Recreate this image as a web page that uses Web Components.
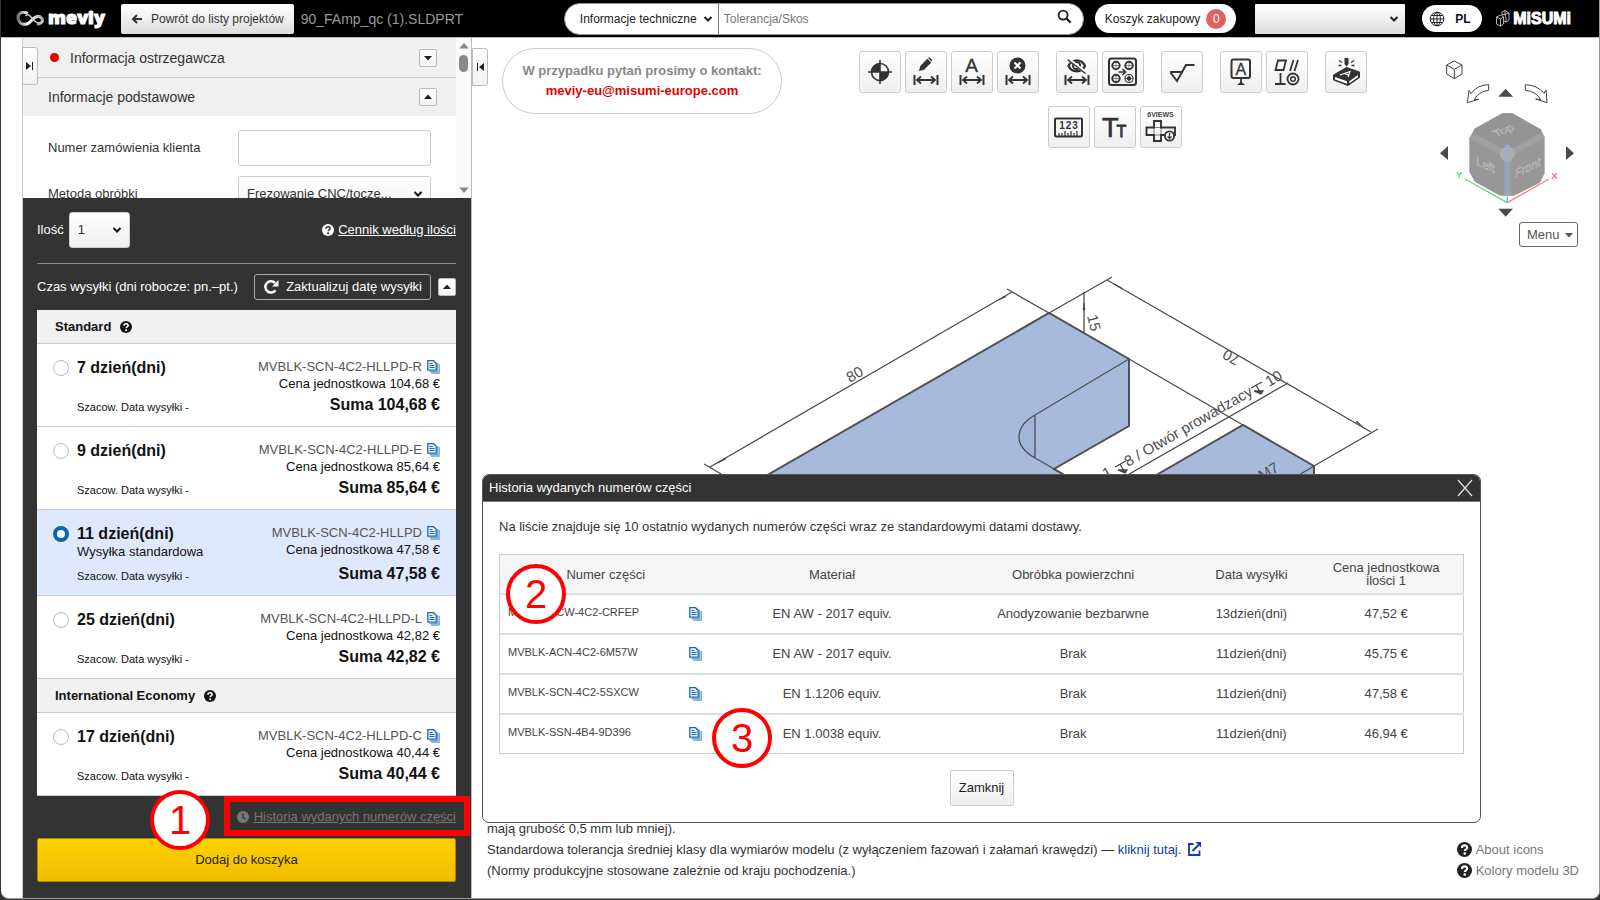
<!DOCTYPE html>
<html lang="pl">
<head>
<meta charset="utf-8">
<title>meviy</title>
<style>
html, body { margin: 0; height: 100%; }
body { background: #333; font: 13px/16px "Liberation Sans", Arial, sans-serif; color: #333; overflow: hidden; }
</style>
</head>
<body>
<meviy-app></meviy-app>
<script>
const define = (name, html, setup) => {
  const tpl = document.createElement('template');
  tpl.innerHTML = html;
  customElements.define(name, class extends HTMLElement {
    constructor() {
      super();
      this.attachShadow({ mode: 'open' }).append(tpl.content.cloneNode(true));
    }
    connectedCallback() { if (setup) setup(this, this.shadowRoot); }
  });
};

const DIM = '<path d="M9.5 24v10M32.5 24v10" stroke-width="2"/><path d="M11.500 29h19M16 25.500 12 29l4 3.500M26 25.500l4 3.500-4 3.500" stroke-width="1.800"/>';
const ICONS = {
  back: ['0 0 12 12', '<path d="M11 6H2M6 2 2 6l4 4" fill="none" stroke="currentColor" stroke-width="2"/>'],
  chevron: ['0 0 10 8', '<path d="m1.500 2 3.500 3.500L8.500 2" fill="none" stroke="currentColor" stroke-width="2"/>'],
  search: ['0 0 16 16', '<circle cx="6.500" cy="6.500" r="4.800" fill="none" stroke="currentColor" stroke-width="2"/><path d="m10 10 4.500 4.500" stroke="currentColor" stroke-width="2.400"/>'],
  globe: ['0 0 16 16', '<g fill="none" stroke="#222" stroke-width="1"><circle cx="8" cy="8" r="6.800"/><ellipse cx="8" cy="8" rx="3.400" ry="6.800"/><path d="M8 1v14M1 8h14M2.200 4.500h11.600M2.200 11.500h11.600"/></g>'],
  down: ['0 0 10 10', '<path d="M1 3h8L5 7.500z" fill="currentColor"/>'],
  up: ['0 0 10 10', '<path d="M1 7h8L5 2.500z" fill="currentColor"/>'],
  right: ['0 0 10 10', '<path d="M1 1v8l5-4z" fill="currentColor"/><path d="M7.500 1v8" stroke="currentColor"/>'],
  left: ['0 0 10 10', '<path d="M9 1v8L4 5z" fill="currentColor"/><path d="M2.500 1v8" stroke="currentColor"/>'],
  help: ['0 0 12 12', '<circle cx="6" cy="6" r="6" fill="currentColor"/><path d="M4 4.700c0-2.600 4.100-2.600 4.100-.2 0 1.400-1.900 1.400-1.900 2.700" fill="none" stroke="var(--hole,#fff)" stroke-width="1.700"/><circle cx="6.200" cy="9.200" r="1.050" fill="var(--hole,#fff)"/>'],
  clock: ['0 0 12 12', '<circle cx="6" cy="6" r="6" fill="currentColor"/><path d="M6 2.500V6.500l2.500 1.500" fill="none" stroke="#333" stroke-width="1.400"/>'],
  refresh: ['0 0 16 16', '<path d="M12.500 11.200A5.600 5.600 0 1 1 12 4" fill="none" stroke="currentColor" stroke-width="2.600"/><path d="M15.500 1v6.500H9z" fill="currentColor"/>'],
  copy: ['0 0 13 14', '<path d="M4 13.200h8.200V4M2.500 11.600h8V3" fill="none" stroke="#6ba3d6" stroke-width="1.300"/><path d="M.8.700h5.700l2.700 2.600v6.900H.8z" fill="#e9f2fb" stroke="#1f69b3" stroke-width="1.300"/><path d="M2.500 3.500h3M2.500 5.500h5M2.500 7.500h5" stroke="#1f69b3"/>'],
  external: ['0 0 13 14', '<path d="M5.500 2H1v11h10.500V8.500" fill="none" stroke="#0b3fa8" stroke-width="1.800"/><path d="M7.500 0H13v5.500z" fill="#0b3fa8"/><path d="m4.500 9 6-6" stroke="#0b3fa8" stroke-width="2"/>'],
  close: ['0 0 16 18', '<path d="m1 1 14 16M15 1 1 17" stroke="currentColor" stroke-width="1.300"/>'],
  target: ['0 0 42 42', '<circle cx="21" cy="21" r="8.500" stroke-width="1.600"/><path d="M21 9v24M9 21h24" stroke-width="1.600"/><path d="M21 21v-8.500A8.500 8.500 0 0 0 12.500 21zM21 21v8.500A8.500 8.500 0 0 0 29.500 21z" fill="#333" stroke="none"/>'],
  pencil: ['0 0 42 42', DIM + '<path d="m14 20 1.300-5 7-7.200 4 3.800-7.200 7.200z" fill="#333" stroke="none"/><path d="m23 7 1.300-.800 3 2.900-.800 1.500z" fill="#333" stroke="none"/>'],
  auto: ['0 0 42 42', DIM + '<text x="20.500" y="20.500" text-anchor="middle" font-size="19" fill="#333" stroke="#333" stroke-width=".4">A</text>'],
  remove: ['0 0 42 42', DIM + '<circle cx="20.500" cy="14.500" r="8" fill="#333" stroke="none"/><path d="m17.500 11.500 6 6M23.500 11.500l-6 6" stroke="#fff" stroke-width="2.200"/>'],
  hide: ['0 0 42 42', DIM + '<path d="M12.500 15c3.500-7.500 13-7.500 16.500 0-3.500 7-13 7-16.500 0z" stroke-width="2.400"/><circle cx="20.500" cy="14.500" r="3.600" stroke-width="2"/><path d="m12.500 8 17 13.500" stroke="#fff" stroke-width="3"/><path d="m11.500 8.500 18 14" stroke-width="1.400"/>'],
  holes: ['0 0 42 42', '<rect x="7" y="7.500" width="27" height="26.500" rx="2.500" stroke-width="2"/><circle cx="14" cy="14.500" r="3.700" stroke-width="1.900"/><circle cx="27" cy="14.500" r="3.700" stroke-width="1.900"/><circle cx="14" cy="27.500" r="3.700" stroke-width="1.900"/><circle cx="27" cy="27.500" r="4" stroke-width="1.100"/><circle cx="27" cy="27.500" r="1.800" fill="#333"/><path d="M9.500 14.500h9M14 10v9M22.500 14.500h9M27 10v9M9.500 27.500h9M14 23v9M22.500 27.500h9M27 23v9" stroke-width=".5"/><path d="M16.500 21h7M20.500 18l3 3-3 3" stroke-width="1.600"/>'],
  rough: ['0 0 42 42', '<path d="M9 21h13M9.500 21.500 16 30l9-16h8.500" stroke-width="2"/>'],
  datum: ['0 0 42 42', '<rect x="11.500" y="8.500" width="18.500" height="18.500" rx="2" stroke-width="2"/><path d="M21 27v5" stroke-width="1.800"/><path d="m17 34 4-3.500 4 3.500z" fill="#333" stroke="none"/><text x="20.800" y="23.500" text-anchor="middle" font-size="16" fill="#333" stroke="#333" stroke-width=".3">A</text>'],
  gdt: ['0 0 42 42', '<path d="M12 9.500h8L17.500 19h-8zM24 20l3.500-11M28.500 20 32 9M14.500 22v10.500M9 33h10.500" stroke-width="1.800"/><circle cx="27" cy="28" r="5.500" stroke-width="1.800"/><circle cx="27" cy="28" r="2.300" stroke-width="1.500"/>'],
  stamp: ['0 0 42 42', '<path d="m8.500 24 13-7.500 13 4.500v5.500L23 34.500 8.500 29z" fill="#333" stroke-width="1"/><path d="m10 26 12 4.300v2.400L10 28.500zM24.300 30.300 33 24v2.300l-8.700 6z" fill="#fff" stroke="none"/><path d="m15 24 10-3.500-2 5.500M19 22.500l5 1.500" stroke="#fff" stroke-width="1.200"/><path d="M19.500 7h4v6l-2 2.500-2-2.500z" fill="#333" stroke="none"/><path d="m14 9.500 3 2M29 9.500l-3 2M13.500 14.500h3M26.500 14.500h3" stroke-width="1.300"/>'],
  ruler: ['0 0 42 42', '<rect x="7" y="12.500" width="27" height="18" rx="1" stroke-width="2"/><text x="21" y="23" text-anchor="middle" font-size="10" font-weight="700" letter-spacing="1" fill="#333" stroke="none">123</text><path d="M11 30v-3M14 30v-3M17 30v-5M20 30v-3M23 30v-5M26 30v-3M29 30v-5" stroke-width="1.200"/>'],
  text: ['0 0 42 42', '<text x="8" y="31" font-size="27" fill="#333" stroke="#333" stroke-width=".6">T</text><text x="22.500" y="31" font-size="16" fill="#333" stroke="#333" stroke-width=".8">T</text>'],
  views: ['0 0 42 42', '<text x="20.500" y="11" text-anchor="middle" font-size="7" font-weight="700" fill="#444" stroke="none">6VIEWS</text><path d="M14 15h7v6.500h14v7.500H21v6h-7v-6H6.500v-7.500H14z" stroke-width="1.900"/><path d="M14 21.500h7v7.500h-7z" stroke-width=".6"/><circle cx="29.500" cy="30" r="4.600" fill="#fff" stroke-width="1.900"/><path d="M29.500 27v5M27.500 30.500l2 2 2-2" stroke-width="1.300"/>']
};
customElements.define('ui-icon', class extends HTMLElement {
  connectedCallback() {
    if (this.shadowRoot) return;
    const [box, body] = ICONS[this.getAttribute('name')];
    const w = this.getAttribute('w'), h = this.getAttribute('h') || w;
    this.attachShadow({ mode: 'open' }).innerHTML =
      `<style>:host{display:inline-flex;flex:none}svg{display:block;font-family:"Liberation Sans",sans-serif}</style>
       <svg width="${w}" height="${h}" viewBox="${box}" aria-hidden="true">${body}</svg>`;
  }
});

define('tool-button', `
<style>
:host { display: block; }
button { display: block; box-sizing: border-box; width: 42px; height: 42px; padding: 0; border: 1px solid #ccc; border-radius: 3px; background: linear-gradient(#fff, #efefef); }
svg { display: block; width: 40px; height: 40px; font-family: "Liberation Sans", sans-serif; }
</style>
<button type="button"><svg viewBox="1 1 40 40" fill="none" stroke="#333" aria-hidden="true"></svg></button>`,
(el, root) => {
  root.querySelector('svg').innerHTML = ICONS[el.getAttribute('icon')][1];
  root.querySelector('button').setAttribute('aria-label', el.getAttribute('label'));
});

define('toggle-button', `
<style>
:host { display: block; flex: none; }
button { display: grid; place-items: center; box-sizing: border-box; width: 18px; height: 18px; padding: 0; border: 1px solid #bbb; border-radius: 2px; background: linear-gradient(#fff, #f2f2f2); color: #222; }
:host([tab]) button { width: 16px; height: 38px; border-radius: 0 3px 3px 0; }
</style>
<button type="button" aria-label="Zwiń lub rozwiń"></button>`,
(el, root) => { root.querySelector('button').innerHTML = `<ui-icon name="${el.getAttribute('icon')}" w="10"></ui-icon>`; });

define('step-badge', `
<style>
:host { position: absolute; box-sizing: border-box; display: grid; place-items: center; width: 60px; height: 60px; border: 4px solid #f00; border-radius: 50%; background: #fff; color: #f00; font-size: 40px; line-height: 52px; }
</style><span><slot></slot></span>`);

define('app-header', `
<style>
:host { display: flex; align-items: center; height: 37px; background: #000; border-bottom: 1px solid #bbb; font-size: 12px; padding-right: 28px; }
button, select, input { font: inherit; border: 0; margin: 0; }
.logo { display: flex; align-items: center; gap: 2px; margin-left: 15px; color: #fff; text-decoration: none; width: 105px; }
.logo b { font: 800 18px/22px "Open Sans", sans-serif; margin-top: -4px; -webkit-text-stroke: 1px #fff; }
.back { display: flex; align-items: center; gap: 8px; height: 30px; padding: 0 10px; background: linear-gradient(#fff, #ddd); color: #333; border-radius: 2px; }
h1 { margin: 0 0 0 7px; font-size: 14px; font-weight: 400; color: #999; white-space: nowrap; flex: 1; }
.search { display: flex; align-items: center; height: 32px; width: 520px; border: 1px solid #999; border-radius: 17px; background: #fff; overflow: hidden; box-sizing: border-box; }
.sel { position: relative; display: flex; align-items: center; color: #222; }
.sel ui-icon { position: absolute; right: 6px; pointer-events: none; }
select { appearance: none; background: none; color: inherit; outline: none; }
.search select { width: 154px; height: 32px; padding: 0 0 0 15px; border-right: 1px solid #777; }
input { flex: 1; padding: 0 5px; outline: none; color: #333; }
input::placeholder { color: #777; }
.search button { background: none; padding: 0 11px; color: #222; }
.cart { display: flex; align-items: center; gap: 6px; height: 29px; margin-left: 11px; padding: 0 10px; border-radius: 15px; background: #fff; color: #222; white-space: nowrap; }
.cart span { display: grid; place-items: center; width: 20px; height: 20px; border-radius: 50%; background: #e06060; color: #fff; }
.user { margin-left: 19px; }
.user select { width: 150px; height: 30px; background: linear-gradient(#fff, #ddd); border-radius: 1px; }
.lang { display: flex; align-items: center; gap: 10px; height: 27px; width: 60px; margin-left: 17px; padding: 0 7px; border-radius: 14px; background: #fff; color: #111; font-weight: 700; }
.misumi { display: flex; align-items: center; gap: 3px; margin-left: 14px; color: #fff; font: 700 16px/18px "Liberation Sans", sans-serif; text-decoration: none; -webkit-text-stroke: 1px #fff; }
</style>
<a class="logo" href="#" aria-label="meviy">
  <svg width="30" height="16" viewBox="0 0 29 16"><defs><linearGradient id="g"><stop offset="0" stop-color="#777"/><stop offset=".4" stop-color="#fff"/><stop offset="1" stop-color="#aaa"/></linearGradient></defs><path d="M11 2.500C5-1 0 3.500 2 9c2 5.500 8.500 5.500 12 1.500 4-4.500 8-7 11-3.500 2.500 3-1 6.500-4 5.500" fill="none" stroke="url(#g)" stroke-width="3"/><path d="M9 5c3-4 6 2 9 5s7 3 9 0" fill="none" stroke="#ccc" stroke-width="1.500"/></svg>
  <b>meviy</b></a>
<button class="back" type="button"><ui-icon name="back" w="12"></ui-icon>Powrót do listy projektów</button>
<h1>90_FAmp_qc (1).SLDPRT</h1>
<div class="search">
  <div class="sel"><select aria-label="Kategoria"><option>Informacje techniczne</option></select><ui-icon name="chevron" w="10" h="8"></ui-icon></div>
  <input type="text" placeholder="Tolerancja/Skos" aria-label="Szukaj">
  <button type="button" aria-label="Szukaj"><ui-icon name="search" w="15"></ui-icon></button>
</div>
<button class="cart" type="button">Koszyk zakupowy <span>0</span></button>
<div class="sel user"><select aria-label="Konto"><option></option></select><ui-icon name="chevron" w="10" h="8"></ui-icon></div>
<button class="lang" type="button"><ui-icon name="globe" w="16"></ui-icon>PL</button>
<a class="misumi" href="#"><svg width="14" height="17" viewBox="0 0 14 17" fill="none" stroke="#ddd" stroke-width=".8"><path d="m.5 7 4-2 3 2v7l-3 2-4-2zM.5 7l4 2 3-2M4.500 9v7M6 5V2l3-1.500L13 3v7l-3 2-2.500-1M9 .5v4l4-1.500M6 5l3-.5 1 3.500v4"/></svg>MiSUMi</a>`);

define('ship-group', `
<style>
:host { display: flex; align-items: center; gap: 9px; box-sizing: border-box; height: 34px; padding: 0 18px; background: #f1f1f1; border-bottom: 1px solid #ccc; color: #111; font-weight: 700; }
</style><slot></slot><ui-icon name="help" w="12"></ui-icon>`);

define('ship-option', `
<style>
:host { --rows: 82px; display: block; background: #fff; border-bottom: 1px solid #ccc; color: #111; }
:host([checked]) { --rows: 85px; background: #dfe9fd; }
label { display: grid; grid-template-columns: 16px auto 1fr; column-gap: 8px; min-height: var(--rows); box-sizing: border-box; padding: 14px 16px 11px; }
input { appearance: none; box-sizing: border-box; width: 16px; height: 16px; margin: 2px 0; border: 1px solid #bbb; border-radius: 50%; background: #fff; }
input:checked { border: 4px solid #0b63b5; }
.l, .r { display: flex; flex-direction: column; }
.r { align-items: flex-end; line-height: 17px; }
b { font-size: 16px; line-height: 20px; }
small { font-size: 11px; margin-top: auto; }
.r b { margin-top: auto; }
.code { display: flex; gap: 5px; align-items: center; color: #555; }
</style>
<label><input type="radio" name="ship"><span class="l"><b class="d"></b><span class="n"></span><small>Szacow. Data wysyłki -</small></span>
<span class="r"><span class="code"><span class="c"></span><ui-icon name="copy" w="13" h="14"></ui-icon></span><span class="u"></span><b class="s"></b></span></label>`,
(el, root) => {
  const q = s => root.querySelector(s), a = n => el.getAttribute(n) || '';
  q('.d').textContent = a('days') + ' dzień(dni)';
  q('.n').textContent = a('note');
  q('.c').textContent = a('code');
  q('.u').textContent = `Cena jednostkowa ${a('price')} €`;
  q('.s').textContent = `Suma ${a('price')} €`;
  q('input').checked = el.hasAttribute('checked');
});

define('side-panel', `
<style>
:host { display: flex; flex-direction: column; position: relative; border-left: 1px solid #ccc; border-right: 1px solid #bbb; box-sizing: border-box; background: #fff; }
.top { display: flex; height: 160px; overflow: hidden; }
.info { flex: 1; }
.row { display: flex; align-items: center; box-sizing: border-box; height: 39px; padding: 0 19px 0 25px; background: #f0f0f0; font-size: 14px; }
.row + .row { border-top: 1px solid #ccc; }
.row span { flex: 1; }
.row i { width: 9px; height: 9px; margin-right: 11px; border-radius: 50%; background: #e60000; }
.row:first-child { padding-left: 27px; }
.field { display: flex; align-items: center; justify-content: space-between; margin: 0 25px 10px; }
.row + .field { margin-top: 14px; }
input, select { font: inherit; color: #333; box-sizing: border-box; border: 1px solid #ccc; border-radius: 3px; height: 36px; outline: none; }
select { appearance: none; width: 100%; padding: 0 8px; background: linear-gradient(#fff, #f0f0f0); }
.field input, .field .sel { width: 193px; }
.sel { position: relative; display: flex; align-items: center; }
.sel ui-icon { position: absolute; right: 8px; pointer-events: none; color: #111; }
.bar { width: 15px; background: #fafafa; display: flex; flex-direction: column; align-items: center; color: #888; padding: 2px 0; box-sizing: border-box; }
.bar i { width: 9px; height: 17px; border-radius: 5px; background: #8a8a8a; margin: 3px 0 auto; }
toggle-button[tab] { position: absolute; left: -1px; top: 9px; }
.dark { flex: 1; background: #333; color: #fff; padding: 14px 15px 16px 14px; display: flex; flex-direction: column; }
.line { display: flex; align-items: center; gap: 5px; }
.qty { padding-bottom: 15px; border-bottom: 1px solid #888; }
.qty .sel { width: 61px; margin-right: auto; }
a { color: inherit; }
.qty a { margin-left: -1px; }
.time { padding: 10px 0; gap: 7px; justify-content: space-between; }
.time .re { display: flex; align-items: center; gap: 7px; height: 26px; box-sizing: border-box; margin-left: auto; padding: 0 8px; font: inherit; color: #fff; background: none; border: 1px solid #aaa; border-radius: 3px; }
.hist { display: flex; justify-content: flex-end; align-items: center; gap: 5px; height: 42px; color: #777; }
.add { height: 44px; border: 1px solid #a68b00; border-radius: 2px; background: linear-gradient(#ffd000, #f0be00); font: inherit; color: #222; }
.frame { position: absolute; right: 1px; top: 758px; width: 246px; height: 40px; box-sizing: border-box; border: 6px solid #f00; pointer-events: none; }
step-badge { left: 127px; top: 752px; }
</style>
<div class="top">
  <div class="info">
    <div class="row"><i></i><span>Informacja ostrzegawcza</span><toggle-button icon="down"></toggle-button></div>
    <div class="row"><span>Informacje podstawowe</span><toggle-button icon="up"></toggle-button></div>
    <div class="field"><label for="order">Numer zamówienia klienta</label><input id="order" type="text"></div>
    <div class="field"><label for="method">Metoda obróbki</label><div class="sel"><select id="method"><option>Frezowanie CNC/tocze...</option></select><ui-icon name="chevron" w="10" h="8"></ui-icon></div></div>
  </div>
  <div class="bar"><ui-icon name="up" w="12"></ui-icon><i></i><ui-icon name="down" w="12"></ui-icon></div>
</div>
<toggle-button tab icon="right"></toggle-button>
<div class="dark">
  <div class="line qty"><label for="qty">Ilość</label><div class="sel"><select id="qty"><option>1</option></select><ui-icon name="chevron" w="10" h="8"></ui-icon></div>
    <ui-icon name="help" w="12" style="--hole:#333"></ui-icon><a href="#">Cennik według ilości</a></div>
  <div class="line time"><span>Czas wysyłki (dni robocze: pn.–pt.)</span><button class="re" type="button"><ui-icon name="refresh" w="16"></ui-icon>Zaktualizuj datę wysyłki</button><toggle-button icon="up"></toggle-button></div>
  <ship-group>Standard</ship-group>
  <ship-option days="7" code="MVBLK-SCN-4C2-HLLPD-R" price="104,68"></ship-option>
  <ship-option days="9" code="MVBLK-SCN-4C2-HLLPD-E" price="85,64"></ship-option>
  <ship-option days="11" code="MVBLK-SCN-4C2-HLLPD" price="47,58" note="Wysyłka standardowa" checked></ship-option>
  <ship-option days="25" code="MVBLK-SCN-4C2-HLLPD-L" price="42,82"></ship-option>
  <ship-group>International Economy</ship-group>
  <ship-option days="17" code="MVBLK-SCN-4C2-HLLPD-C" price="40,44"></ship-option>
  <div class="hist"><ui-icon name="clock" w="12"></ui-icon><a href="#">Historia wydanych numerów części</a></div>
  <button class="add" type="button">Dodaj do koszyka</button>
</div>
<div class="frame"></div>
<step-badge>1</step-badge>`);

define('history-dialog', `
<style>
:host { position: absolute; display: block; box-sizing: border-box; border: 1px solid #555; border-radius: 7px; background: #fff; overflow: hidden; }
header { display: flex; align-items: center; justify-content: space-between; height: 26px; padding: 0 7px 0 6px; background: #333; color: #fff; border-bottom: 1px solid #777; }
h2 { font-size: 13px; font-weight: 400; margin: 0; }
header button { padding: 0; border: 0; background: none; color: #ddd; display: flex; }
p { margin: 17px 16px 19px; }
table { width: calc(100% - 32px); margin: 0 16px; border-collapse: collapse; table-layout: fixed; border: 1px solid #ccc; }
th { background: #f6f6f6; font-weight: 400; line-height: 13px; }
th, td { height: 38px; padding: 0; text-align: center; border-bottom: 2px solid #ddd; color: #444; }
tr:last-child td { border-bottom: 1px solid #ccc; }
.cell { display: flex; align-items: center; justify-content: space-between; padding: 0 10px 0 8px; font-size: 11px; }
.cell span { margin-top: -5px; }
footer { display: flex; justify-content: center; padding: 16px 0; }
footer button { width: 64px; height: 36px; padding: 0; border: 1px solid #ccc; border-radius: 2px; background: linear-gradient(#fff, #efefef); font: inherit; color: #222; }
.two { left: 23px; top: 89px; }
.three { left: 229px; top: 233px; }
</style>
<header><h2>Historia wydanych numerów części</h2><button type="button" aria-label="Zamknij"><ui-icon name="close" w="16" h="18"></ui-icon></button></header>
<p>Na liście znajduje się 10 ostatnio wydanych numerów części wraz ze standardowymi datami dostawy.</p>
<table>
<colgroup><col style="width:22%"><col style="width:25%"><col style="width:25%"><col style="width:12%"><col></colgroup>
<thead><tr><th>Numer części</th><th>Materiał</th><th>Obróbka powierzchni</th><th>Data wysyłki</th><th>Cena jednostkowa<br>ilości 1</th></tr></thead>
<tbody></tbody></table>
<footer><button type="button">Zamknij</button></footer>
<step-badge class="two">2</step-badge><step-badge class="three">3</step-badge>`,
(el, root) => {
  root.querySelector('tbody').innerHTML = [
    ['MVBLK-ACW-4C2-CRFEP', 'EN AW - 2017 equiv.', 'Anodyzowanie bezbarwne', '13dzień(dni)', '47,52 €'],
    ['MVBLK-ACN-4C2-6M57W', 'EN AW - 2017 equiv.', 'Brak', '11dzień(dni)', '45,75 €'],
    ['MVBLK-SCN-4C2-5SXCW', 'EN 1.1206 equiv.', 'Brak', '11dzień(dni)', '47,58 €'],
    ['MVBLK-SSN-4B4-9D396', 'EN 1.0038 equiv.', 'Brak', '11dzień(dni)', '46,94 €']
  ].map(([c, ...r]) => `<tr><td><div class="cell"><span>${c}</span><ui-icon name="copy" w="13" h="14"></ui-icon></div></td>${r.map(t => `<td>${t}</td>`).join('')}</tr>`).join('');
});

define('view-cube', `
<style>
:host { display: flex; flex-direction: column; align-items: flex-end; width: 180px; }
svg { display: block; width: 180px; height: 172px; font-family: "Liberation Sans", sans-serif; }
button { display: flex; align-items: center; justify-content: space-between; box-sizing: border-box; width: 59px; height: 25px; margin-right: 21px; padding: 0 3px 0 7px; border: 1px solid #666; border-radius: 3px; background: #fff; font: inherit; color: #555; }
</style>
<svg viewBox="0 0 540 516" role="img" aria-label="Kostka widoku">
<g fill="#fff" stroke="#444" stroke-width="3"><path d="m106 33 23 12v27l-23 14-23-14V45zM83 45l23 13 23-13M106 58v28"/>
<path d="M209 104v17q-32 4-43 28l13-1-34 10 5-37 6 10q18-26 53-27zM319 104v17q35 4 46 28l-15-2 34 11-3-38-6 10q-20-25-56-26z"/></g>
<g fill="#4a4a4a"><path d="m238 140 22-24 22 24zM238 476l22 24 22-24zM87 288v42l-24-20zM441 288v42l24-20z"/></g>
<path d="M250 190h30l85 48 12 24v108l-14 28-78 39h-42l-76-42-16-30V265l15-28z" fill="#979797"/>
<g fill="#a0a0a0"><path d="m150 265 15-14 88 47-12 14-76-40zM377 262l-14-12-88 48 13 14 76-42zM255 330h22v107h-22z"/><path d="m165 237 85-47h30l85 48-2 12-98 50-98-49z" fill="#949494"/></g>
<path d="m265 288 20 10 3 20-12 16h-22l-12-16 3-20z" fill="#adadad"/>
<g fill="#999" stroke="#c6c6c6" stroke-width="1.500" font-size="40"><text transform="matrix(.86 -.38 .5 .6 232 262)">Top</text><text transform="matrix(.82 .36 0 .9 172 345)">Left</text><text transform="matrix(.82 -.4 0 .9 288 384)">Front</text></g>
<g stroke-width="4"><path d="m265 458-127-71" stroke="#5dd67c"/><path d="m265 458 125-71" stroke="#ff7b7b"/><path d="M265 458V315" stroke="#7ab4f0"/></g>
<g font-size="28" font-weight="700" text-anchor="middle"><text x="120" y="385" fill="#5dd67c">Y</text><text x="407" y="386" fill="#ff6b6b">X</text><text x="265" y="303" fill="#7ab4f0">Z</text></g>
</svg>
<button type="button">Menu<ui-icon name="down" w="10"></ui-icon></button>`);

define('cad-model', `
<style>:host { display: block; } svg { display: block; width: 700px; height: 215px; font: 15px "Liberation Sans", sans-serif; }</style>
<svg viewBox="690 270 700 215" role="img" aria-label="Model 3D">
<g fill="#a8badc" stroke="none"><path d="M750 485 1049 313l80 46v67l-75 43 28 16z"/><path d="m1139 485 104-60 71 41v19z"/></g>
<g fill="none" stroke="#505050" stroke-width="2"><path d="M750 485 1049 313l80 46v67l-75 43 28 16"/><path d="m1139 485 104-60 71 41v19"/></g>
<path d="M1035 415q-16 9-16 22 0 12 16 21z" fill="#9fb4d6"/>
<g fill="none" stroke="#4d4d4d" stroke-width="1.300"><path d="m1129 359-94 56q-16 9-16 22 0 12 16 21l28 16M1035 415v43M1314 466l-32 19"/>
<path d="m710 467 302-175M704 464l36 21M1007 289l42 24 63-36M1084 292v41M1107 280l264 152M1378 429l-64 37M1129 359l114 66M1110 485l178-102"/></g>
<path d="m718 463 7-5 1 1zM998 300l7-4 1 1zM1084 303l1 7h-2zM1114 284l8 4v1zM1363 427l-7-5 1-1z" fill="#444" stroke="#444" stroke-width=".5"/>
<g fill="#505050"><text transform="translate(850 383) rotate(-30)">80</text><text transform="translate(1087 316) rotate(76)">15</text><text transform="translate(1241 357) rotate(210)">70</text>
<text transform="translate(1128 467) rotate(-30)">8 / Otwór prowadzacy</text><text transform="translate(1269 387) rotate(-30)">10</text><text transform="translate(1262 481) rotate(-30)">M7</text><text transform="translate(1106 479) rotate(-30)">1</text></g>
<g fill="#444" stroke="#444" stroke-width="1.300"><path d="m1251 388 11-6M1256 385l4 7M1254 391h9l-2 3zM1115 467l11-6M1120 464l4 7M1118 470h9l-2 3z"/></g>
</svg>`);

define('cad-viewer', `
<style>
:host { display: flex; flex-direction: column; position: relative; background: #fff; }
toggle-button { position: absolute; left: 0; top: 10px; }
.top { display: flex; }
.contact { box-sizing: border-box; width: 280px; height: 66px; flex: none; margin: 10px 0 0 30px; padding: 12px 0; border: 1px solid #ccc; border-radius: 33px; text-align: center; font-weight: 700; line-height: 20px; color: #888; }
.contact a { color: #e60000; text-decoration: none; display: block; }
.tools { flex: 1; padding: 13px 0 0 24px; display: flex; flex-direction: column; gap: 13px; }
.tools div { display: flex; justify-content: center; gap: 17px; }
.tools div span { display: flex; gap: 4px; }
.tools .second { padding-left: 4px; }
view-cube { margin-top: 12px; }
cad-model { position: absolute; left: 218px; top: 232px; }
history-dialog { left: 10px; right: 118px; top: 436px; z-index: 1; }
.notes { display: flex; justify-content: space-between; align-items: flex-end; margin-top: auto; padding: 0 20px 17px 15px; line-height: 21px; }
.notes p { margin: 0; }
.notes p a { color: #0b3fa8; text-decoration: none; }
.notes ui-icon { vertical-align: -2px; margin-left: 3px; }
.help { display: grid; }
.help a { display: flex; align-items: center; gap: 4px; color: #777; text-decoration: none; }
.help ui-icon { color: #222; margin: 0; }
</style>
<cad-model></cad-model>
<toggle-button tab icon="left"></toggle-button>
<div class="top">
  <div class="contact">W przypadku pytań prosimy o kontakt:<a href="mailto:meviy-eu@misumi-europe.com">meviy-eu@misumi-europe.com</a></div>
  <div class="tools">
    <div><span><tool-button icon="target" label="Punkt bazowy"></tool-button><tool-button icon="pencil" label="Edycja wymiaru"></tool-button><tool-button icon="auto" label="Wymiar automatyczny"></tool-button><tool-button icon="remove" label="Usuń wymiar"></tool-button></span>
    <span><tool-button icon="hide" label="Ukryj wymiary"></tool-button><tool-button icon="holes" label="Otwory"></tool-button></span>
    <span><tool-button icon="rough" label="Chropowatość"></tool-button></span>
    <span><tool-button icon="datum" label="Baza"></tool-button><tool-button icon="gdt" label="Tolerancje geometryczne"></tool-button></span>
    <span><tool-button icon="stamp" label="Grawerowanie"></tool-button></span></div>
    <div class="second"><span><tool-button icon="ruler" label="Pomiar"></tool-button><tool-button icon="text" label="Tekst"></tool-button><tool-button icon="views" label="Sześć widoków"></tool-button></span></div>
  </div>
  <view-cube></view-cube>
</div>
<history-dialog></history-dialog>
<div class="notes">
  <p>mają grubość 0,5 mm lub mniej).<br>Standardowa tolerancja średniej klasy dla wymiarów modelu (z wyłączeniem fazowań i załamań krawędzi) — <a href="#">kliknij tutaj. <ui-icon name="external" w="13" h="14"></ui-icon></a><br>(Normy produkcyjne stosowane zależnie od kraju pochodzenia.)</p>
  <div class="help"><a href="#"><ui-icon name="help" w="15"></ui-icon>About icons</a><a href="#"><ui-icon name="help" w="15"></ui-icon>Kolory modelu 3D</a></div>
</div>`);

define('meviy-app', `
<style>
:host { display: flex; flex-direction: column; box-sizing: border-box; min-height: calc(100vh - 2px); margin-left: 1px; background: #fff; border-right: 1px solid #999; border-bottom: 1px solid #999; border-radius: 0 0 8px 8px; overflow: hidden; }
main { flex: 1; display: grid; grid-template-columns: 450px 1fr; padding-left: 21px; }
</style>
<app-header></app-header>
<main><side-panel></side-panel><cad-viewer></cad-viewer></main>`);
</script>
</body>
</html>
